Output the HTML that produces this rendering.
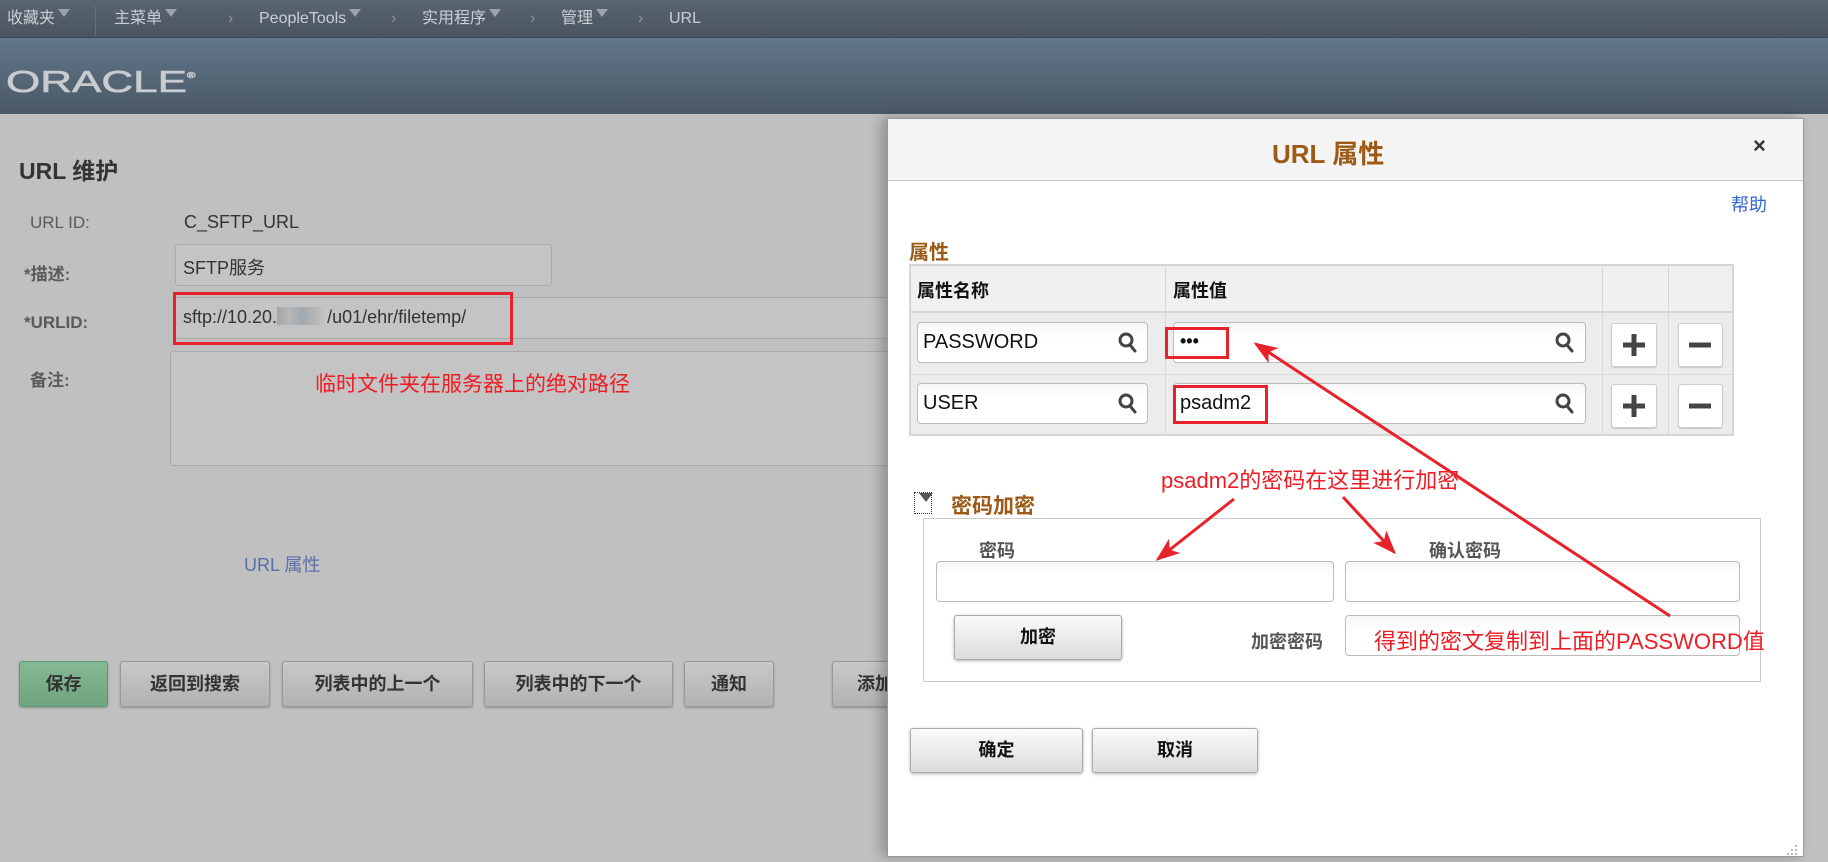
<!DOCTYPE html>
<html><head><meta charset="utf-8"><style>
*{margin:0;padding:0;box-sizing:border-box}
body{width:1828px;height:862px;position:relative;overflow:hidden;background:#c0c0c0;font-family:"Liberation Sans","Noto Sans CJK SC",sans-serif;}
.a{position:absolute;white-space:nowrap}
.nav{left:0;top:0;width:1828px;height:38px;background:linear-gradient(#58646f,#4a5561);border-bottom:1px solid #3f4a55}
.nt{color:#c9cfd5;font-size:16px;top:8px;height:22px;line-height:22px}
.tri{display:inline-block;width:0;height:0;border-left:6px solid transparent;border-right:6px solid transparent;border-top:8px solid #9aa3ac;margin-left:3px;vertical-align:6px}
.hd{left:0;top:38px;width:1828px;height:76px;background:linear-gradient(#607689,#4b5866)}
.lbl{color:#5a5a5a;font-size:17px;font-weight:bold}
.inp{border:1px solid #aaa;border-radius:3px;background:#c4c4c4}
.btn{border:1px solid #9a9a9a;border-radius:3px;background:linear-gradient(#c8c8c8,#b2b2b2);color:#333;font-weight:bold;font-size:18px;text-align:center;box-shadow:0 1px 2px rgba(0,0,0,.25)}
.modal{left:887px;top:118px;width:917px;height:739px;background:#fff;border:1px solid #999;box-shadow:-6px 0 12px rgba(0,0,0,.25)}
.mi{border:1px solid #bbb;border-radius:4px;background:linear-gradient(#f7f7f7,#fff 40%);}
.mb{border:1px solid #aaa;border-radius:3px;background:linear-gradient(#fafafa,#dcdcdc);color:#111;font-weight:bold;font-size:18px;text-align:center;box-shadow:0 1px 3px rgba(0,0,0,.3)}
.sq{border:1px solid #ccc;border-radius:3px;background:#fff;box-shadow:0 1px 1px rgba(0,0,0,.15)}
.red{color:#ee1c24}
.rb{border:3px solid #e8222a}
</style></head><body>
<div class="a nav"></div>
<div class="a" style="left:95px;top:6px;width:1px;height:30px;background:#66717c"></div>
<div class="a nt" style="left:7px">收藏夹<span class="tri"></span></div>
<div class="a nt" style="left:114px">主菜单<span class="tri"></span></div>
<div class="a nt" style="left:228px;color:#8e98a2">›</div>
<div class="a nt" style="left:259px">PeopleTools<span class="tri"></span></div>
<div class="a nt" style="left:391px;color:#8e98a2">›</div>
<div class="a nt" style="left:422px">实用程序<span class="tri"></span></div>
<div class="a nt" style="left:530px;color:#8e98a2">›</div>
<div class="a nt" style="left:561px">管理<span class="tri"></span></div>
<div class="a nt" style="left:638px;color:#8e98a2">›</div>
<div class="a nt" style="left:669px">URL</div>
<div class="a hd"></div>
<div class="a" style="left:6px;top:60px;color:#c8ccd0;font-size:31px;line-height:32px;transform:scaleX(1.42);transform-origin:left;-webkit-text-stroke:0.6px #c8ccd0">ORACLE<span style="font-size:8px;vertical-align:14px">®</span></div>

<div class="a" style="left:19px;top:152px;font-size:23px;font-weight:bold;color:#333">URL 维护</div>
<div class="a lbl" style="left:30px;top:213px;font-weight:normal">URL ID:</div>
<div class="a" style="left:184px;top:212px;font-size:18px;color:#333">C_SFTP_URL</div>
<div class="a lbl" style="left:24px;top:260px">*描述:</div>
<div class="a inp" style="left:175px;top:244px;width:377px;height:42px"></div>
<div class="a" style="left:183px;top:254px;font-size:18px;color:#333">SFTP服务</div>
<div class="a lbl" style="left:24px;top:313px">*URLID:</div>
<div class="a inp" style="left:175px;top:297px;width:720px;height:42px"></div>
<div class="a" style="left:183px;top:307px;font-size:18px;color:#333">sftp://10.20.<span style="display:inline-block;width:50px;height:18px;background:linear-gradient(90deg,#a5a5a5,#b8b8b8,#a0a8ae,#b5b5b5,#c8c8c8);vertical-align:-2px"></span>/u01/ehr/filetemp/</div>
<div class="a rb" style="left:173px;top:292px;width:340px;height:53px"></div>
<div class="a lbl" style="left:30px;top:366px">备注:</div>
<div class="a inp" style="left:170px;top:351px;width:730px;height:115px"></div>
<div class="a red" style="left:315px;top:368px;font-size:21px">临时文件夹在服务器上的绝对路径</div>
<div class="a" style="left:244px;top:551px;font-size:18px;color:#5a6fa8">URL 属性</div>
<div class="a btn" style="left:19px;top:661px;width:89px;height:46px;line-height:44px;background:linear-gradient(#86b896,#6fa47f);border-color:#5f9a70">保存</div>
<div class="a btn" style="left:120px;top:661px;width:150px;height:46px;line-height:44px">返回到搜索</div>
<div class="a btn" style="left:282px;top:661px;width:191px;height:46px;line-height:44px">列表中的上一个</div>
<div class="a btn" style="left:484px;top:661px;width:189px;height:46px;line-height:44px">列表中的下一个</div>
<div class="a btn" style="left:684px;top:661px;width:90px;height:46px;line-height:44px">通知</div>
<div class="a btn" style="left:832px;top:661px;width:90px;height:46px;line-height:44px;text-align:left;padding-left:24px">添加</div>

<div class="a modal"></div>
<div class="a" style="left:888px;top:119px;width:915px;height:62px;background:#f4f4f4;border-bottom:1px solid #ccc"></div>
<div class="a" style="left:1272px;top:134px;font-size:26px;font-weight:bold;color:#9c5a16">URL 属性</div>
<div class="a" style="left:1753px;top:133px;font-size:22px;color:#333;font-weight:bold">×</div>
<div class="a" style="left:1731px;top:191px;font-size:18px;color:#3366cc">帮助</div>
<div class="a" style="left:909px;top:236px;font-size:20px;font-weight:bold;color:#9c5a16">属性</div>
<div class="a" style="left:909px;top:264px;width:825px;height:172px;background:#ececec;border:2px solid #d5d5d5"></div>
<div class="a" style="left:911px;top:266px;width:821px;height:47px;background:#f0f0f0;border-bottom:2px solid #d5d5d5"></div>
<div class="a" style="left:911px;top:374px;width:821px;height:1px;background:#d8d8d8"></div>
<div class="a" style="left:1165px;top:266px;width:1px;height:168px;background:#d8d8d8"></div>
<div class="a" style="left:1602px;top:266px;width:1px;height:168px;background:#d8d8d8"></div>
<div class="a" style="left:1668px;top:266px;width:1px;height:168px;background:#d8d8d8"></div>
<div class="a" style="left:917px;top:277px;font-size:18px;font-weight:bold;color:#111">属性名称</div>
<div class="a" style="left:1173px;top:277px;font-size:18px;font-weight:bold;color:#111">属性值</div>

<div class="a mi" style="left:917px;top:322px;width:231px;height:41px"></div>
<div class="a" style="left:923px;top:331px;font-size:20px;color:#111">PASSWORD</div>
<div class="a mi" style="left:1173px;top:322px;width:413px;height:41px"></div>
<div class="a" style="left:1180px;top:331px;font-size:18px;color:#111;font-weight:bold">•••</div>
<div class="a mi" style="left:917px;top:383px;width:231px;height:41px"></div>
<div class="a" style="left:923px;top:392px;font-size:20px;color:#111">USER</div>
<div class="a mi" style="left:1173px;top:383px;width:413px;height:41px"></div>
<div class="a" style="left:1180px;top:392px;font-size:20px;color:#111">psadm2</div>
<svg class="a" style="left:0;top:0" width="1828" height="862">
<g stroke="#444" stroke-width="3" fill="none" stroke-linecap="round">
<circle cx="1126" cy="340" r="6"/><line x1="1130" y1="345" x2="1135" y2="351"/>
<circle cx="1126" cy="401" r="6"/><line x1="1130" y1="406" x2="1135" y2="412"/>
<circle cx="1563" cy="340" r="6"/><line x1="1567" y1="345" x2="1572" y2="351"/>
<circle cx="1563" cy="401" r="6"/><line x1="1567" y1="406" x2="1572" y2="412"/>
</g>
</svg>
<div class="a sq" style="left:1611px;top:323px;width:46px;height:44px"></div>
<div class="a sq" style="left:1678px;top:323px;width:45px;height:44px"></div>
<div class="a sq" style="left:1611px;top:384px;width:46px;height:44px"></div>
<div class="a sq" style="left:1678px;top:384px;width:45px;height:44px"></div>
<svg class="a" style="left:0;top:0" width="1828" height="862">
<g stroke="#444" stroke-width="5">
<line x1="1623" y1="345" x2="1645" y2="345"/><line x1="1634" y1="334" x2="1634" y2="356"/>
<line x1="1689" y1="345" x2="1711" y2="345"/>
<line x1="1623" y1="406" x2="1645" y2="406"/><line x1="1634" y1="395" x2="1634" y2="417"/>
<line x1="1689" y1="406" x2="1711" y2="406"/>
</g>
</svg>
<div class="a rb" style="left:1165px;top:327px;width:64px;height:32px"></div>
<div class="a rb" style="left:1173px;top:385px;width:95px;height:39px"></div>

<div class="a" style="left:914px;top:492px;width:18px;height:22px;border:1px dotted #333"></div>
<div class="a" style="left:919px;top:493px;width:0;height:0;border-left:7px solid transparent;border-right:7px solid transparent;border-top:9px solid #555"></div>
<div class="a" style="left:951px;top:490px;font-size:21px;font-weight:bold;color:#9c5a16">密码加密</div>
<div class="a" style="left:923px;top:518px;width:838px;height:164px;border:1px solid #ccc"></div>
<div class="a" style="left:979px;top:540px;font-size:18px;font-weight:bold;color:#555;line-height:22px">密码</div>
<div class="a" style="left:1429px;top:540px;font-size:18px;font-weight:bold;color:#555;line-height:22px">确认密码</div>
<div class="a mi" style="left:936px;top:561px;width:398px;height:41px"></div>
<div class="a mi" style="left:1345px;top:561px;width:395px;height:41px"></div>
<div class="a mb" style="left:954px;top:615px;width:168px;height:45px;line-height:43px">加密</div>
<div class="a" style="left:1251px;top:628px;font-size:18px;font-weight:bold;color:#555">加密密码</div>
<div class="a mi" style="left:1345px;top:615px;width:395px;height:41px"></div>
<div class="a red" style="left:1374px;top:624px;font-size:22px">得到的密文复制到上面的PASSWORD值</div>
<div class="a red" style="left:1161px;top:463px;font-size:22px">psadm2的密码在这里进行加密</div>
<div class="a mb" style="left:910px;top:728px;width:173px;height:45px;line-height:43px">确定</div>
<div class="a mb" style="left:1092px;top:728px;width:166px;height:45px;line-height:43px">取消</div>

<svg class="a" style="left:0;top:0" width="1828" height="862">
<defs><marker id="m" markerWidth="8" markerHeight="6" refX="7" refY="3" orient="auto" markerUnits="strokeWidth"><path d="M0,0 L8,3 L0,6 L2,3 Z" fill="#e8222a"/></marker></defs>
<g stroke="#e8222a" stroke-width="3" fill="none" marker-end="url(#m)">
<line x1="1670" y1="616" x2="1256" y2="344"/>
<line x1="1234" y1="499" x2="1158" y2="559"/>
<line x1="1343" y1="497" x2="1394" y2="552"/>
</g>
<g fill="#bbb"><rect x="1795" y="845" width="2" height="2"/><rect x="1791" y="849" width="2" height="2"/><rect x="1795" y="849" width="2" height="2"/><rect x="1787" y="853" width="2" height="2"/><rect x="1791" y="853" width="2" height="2"/><rect x="1795" y="853" width="2" height="2"/></g>
</svg>
</body></html>
